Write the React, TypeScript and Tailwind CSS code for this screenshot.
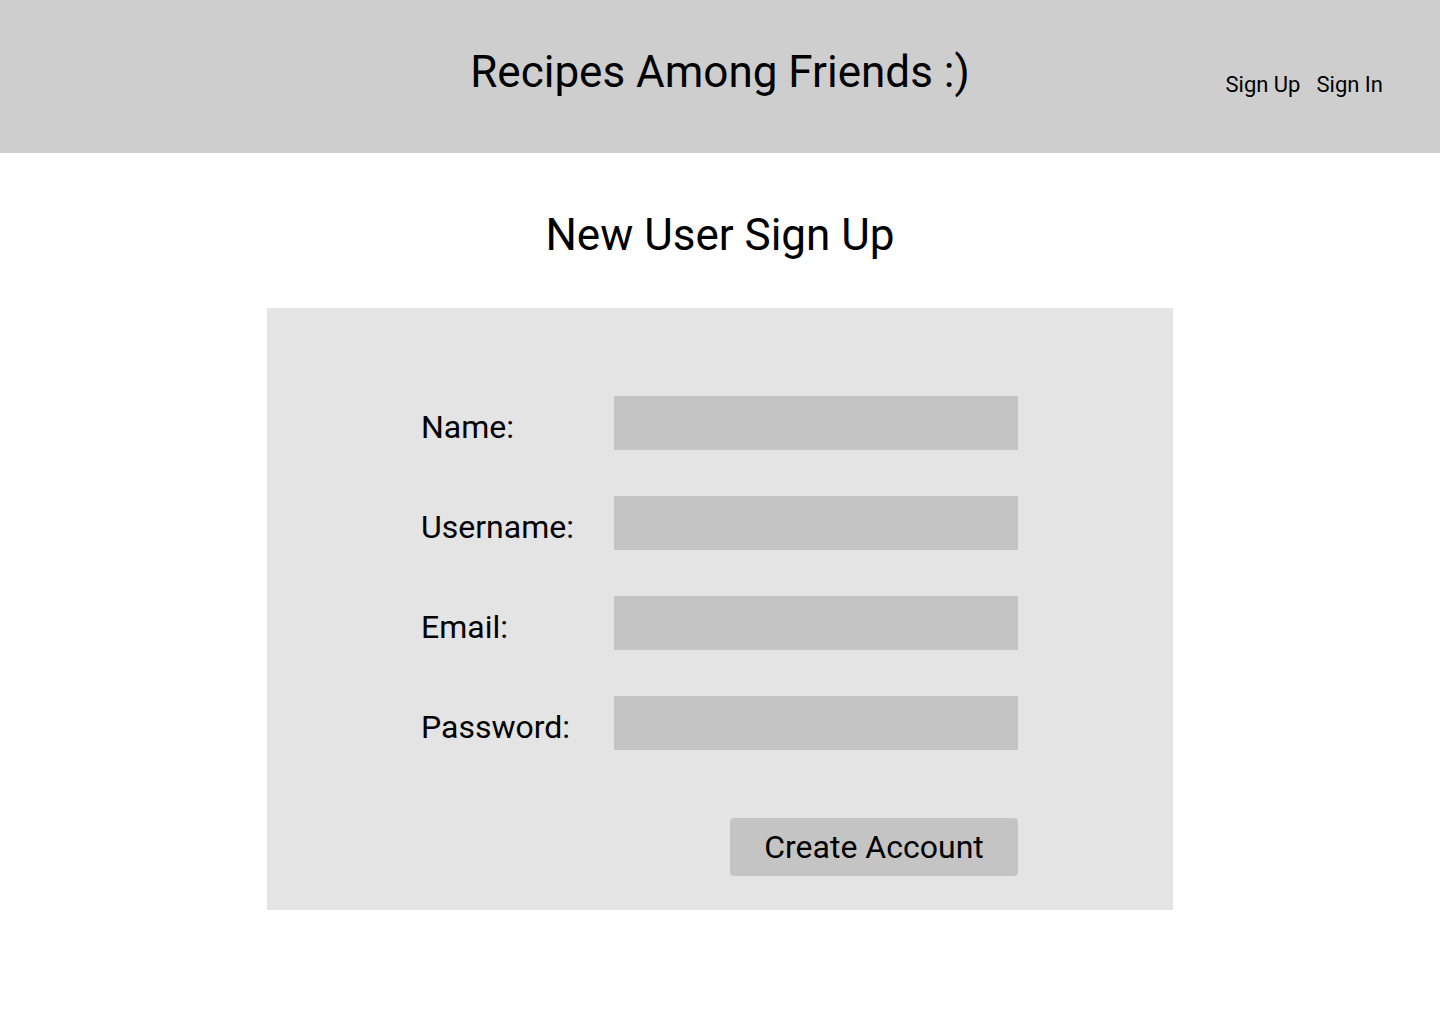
const fields = ["Name:", "Username:", "Email:", "Password:"];

function Header() {
  return (
    <header className="h-[153px] bg-[#cecece] grid grid-cols-[1fr_auto_1fr]">
      <div />
      <h1 className="pt-[46px] text-[44px] leading-[52px] text-black">Recipes Among Friends :)</h1>
      <nav className="flex justify-end gap-[16px] pt-[72px] pr-[57px] text-[22px] leading-[26px] text-black">
        <a href="#">Sign Up</a>
        <a href="#">Sign In</a>
      </nav>
    </header>
  );
}

function SignUpForm() {
  return (
    <form className="w-[906px] mx-auto bg-[#e4e4e4] pt-[88px] pb-[34px]">
      <div className="w-[597px] ml-[154px] flex flex-col gap-[46px]">
        {fields.map((label) => (
          <div key={label} className="flex items-start">
            <label className="w-[193px] pt-[12px] text-[32px] leading-[38px] text-black">{label}</label>
            <input className="w-[404px] h-[54px] bg-[#c4c4c4] outline-none px-3 text-[24px]" />
          </div>
        ))}
        <div className="flex justify-end mt-[22px]">
          <button
            type="button"
            className="w-[288px] h-[58px] rounded bg-[#c4c4c4] text-[32px] leading-[38px] text-black"
          >
            Create Account
          </button>
        </div>
      </div>
    </form>
  );
}

export default function App() {
  return (
    <div className="min-h-[1024px] bg-white font-['Roboto',sans-serif]">
      <Header />
      <h2 className="mt-[56px] mb-[47px] text-center text-[44px] leading-[52px] text-black">New User Sign Up</h2>
      <SignUpForm />
    </div>
  );
}
